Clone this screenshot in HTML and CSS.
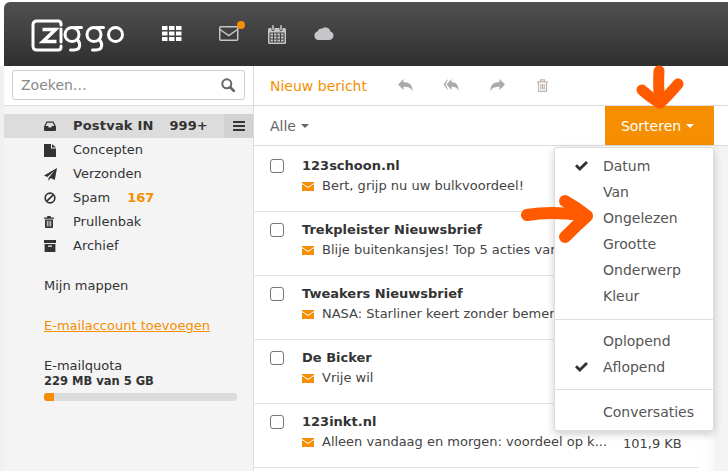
FILE: index.html
```html
<!DOCTYPE html>
<html lang="nl">
<head>
<meta charset="utf-8">
<title>Ziggo Mail</title>
<link rel="stylesheet" href="styles.css">
</head>
<body>
<div class="app">
  <header class="topbar">
    <svg class="logo" width="94" height="34" viewBox="0 0 94 34" fill="none" stroke="#fff" stroke-width="3" stroke-linecap="round">
      <path d="M30 6V5Q30 2 27 2H6Q2 2 2 6V27Q2 31 6 31H27Q30 31 30 28V27"/>
      <path d="M11.500 10.500H24.500L12 22.500H25.500" stroke-width="3.500" stroke-linecap="butt"/>
      <path d="M30 10V23"/>
      <circle cx="41" cy="15.500" r="7"/>
      <path d="M44 8.500H50.500M46 20.500C50 24 50 31 43 31H39.500"/>
      <circle cx="63" cy="15.500" r="7"/>
      <path d="M66 8.500H72.500M68 20.500C72 24 72 31 65 31H61.500"/>
      <circle cx="84.500" cy="15.500" r="7"/>
    </svg>
    <svg class="ico-apps" width="20" height="15" viewBox="0 0 20 15" fill="#fff">
      <rect x="0" y="0" width="5.500" height="4"/><rect x="7" y="0" width="5.500" height="4"/><rect x="14" y="0" width="5.500" height="4"/>
      <rect x="0" y="5.500" width="5.500" height="4"/><rect x="7" y="5.500" width="5.500" height="4"/><rect x="14" y="5.500" width="5.500" height="4"/>
      <rect x="0" y="11" width="5.500" height="4"/><rect x="7" y="11" width="5.500" height="4"/><rect x="14" y="11" width="5.500" height="4"/>
    </svg>
    <span class="mailwrap">
      <svg width="20" height="15" viewBox="0 0 20 15" fill="none" stroke="#c4c6c9" stroke-width="1.500"><rect x=".75" y=".75" width="18" height="13.500" rx="1"/><path d="M1 3.500L9.750 9.500L18.500 3.500"/></svg>
      <span class="dot"></span>
    </span>
    <svg class="ico-cal" width="18" height="19" viewBox="0 0 18 19" fill="#c4c6c9">
      <path d="M1.500 3H3.500V4.500Q3.500 6 5 6T6.500 4.500V3H11.500V4.500Q11.500 6 13 6T14.500 4.500V3H16.500Q18 3 18 4.500V17.500Q18 19 16.500 19H1.500Q0 19 0 17.500V4.500Q0 3 1.500 3ZM1.500 7.500V17.500H16.500V7.500ZM4.200 .8Q4.200 0 5 0T5.800 .8V4.500Q5.800 5.200 5 5.200T4.200 4.500ZM12.200 .8Q12.200 0 13 0T13.800 .8V4.500Q13.800 5.200 13 5.200T12.200 4.500Z"/>
      <path d="M2.500 8.500h2.500v2h-2.500zM6 8.500h2.500v2H6zM9.500 8.500h2.500v2H9.500zM13 8.500h2.500v2H13zM2.500 11.500h2.500v2h-2.500zM6 11.500h2.500v2H6zM9.500 11.500h2.500v2H9.500zM13 11.500h2.500v2H13zM2.500 14.500h2.500v2h-2.500zM6 14.500h2.500v2H6zM9.500 14.500h2.500v2H9.500zM13 14.500h2.500v2H13z"/>
    </svg>
    <svg class="ico-cloud" width="20" height="14" viewBox="0 0 20 14" fill="#c4c6c9"><path d="M4.500 14A4.300 4.300 0 0 1 3.500 5.600A4.700 4.700 0 0 1 8.300 2.400A5 5 0 0 1 16.300 5.400A4.400 4.400 0 0 1 15.500 14Z"/></svg>
  </header>

  <div class="main">
    <aside class="sidebar">
      <div class="searchbar">
        <div class="search">
          <span class="search-text">Zoeken…</span>
          <svg width="14" height="14" viewBox="0 0 14 14" fill="none" stroke="#666" stroke-width="2"><circle cx="5.800" cy="5.800" r="4.500"/><path d="M9 9L13 13" stroke-width="2.500" stroke-linecap="round"/></svg>
        </div>
      </div>
      <nav class="folders">
        <div class="folder active">
          <svg class="ficon" width="12" height="12" viewBox="0 0 12 12" fill="#333"><path d="M2.500 1.500H9.500L12 6.500V10Q12 11 11 11H1Q0 11 0 10V6.500ZM3.200 2.700L1.600 6H4L4.800 7.500H7.200L8 6H10.400L8.800 2.700Z"/></svg>
          <span class="fname">Postvak IN</span><span class="fcount">999+</span>
          <span class="fmenu"><svg width="12" height="10" viewBox="0 0 12 10" fill="#333"><rect width="12" height="2" rx=".5"/><rect y="4" width="12" height="2" rx=".5"/><rect y="8" width="12" height="2" rx=".5"/></svg></span>
        </div>
        <div class="folder">
          <svg class="ficon" width="12" height="13" viewBox="0 0 12 13" fill="#333"><path d="M0 0H7V4.500H12V13H0ZM8 0L12 3.500H8Z"/></svg>
          <span class="fname">Concepten</span>
        </div>
        <div class="folder">
          <svg class="ficon" width="13" height="13" viewBox="0 0 13 13" fill="#333"><path d="M13 0L10.800 12L6.500 10L4.500 13V10L10.500 2.800L3.200 9L0 7.500Z"/></svg>
          <span class="fname">Verzonden</span>
        </div>
        <div class="folder">
          <svg class="ficon" width="12" height="12" viewBox="0 0 12 12" fill="none" stroke="#333" stroke-width="1.700"><circle cx="6" cy="6" r="4.800"/><path d="M2.800 9.200L9.200 2.800"/></svg>
          <span class="fname">Spam</span><span class="fcount spam">167</span>
        </div>
        <div class="folder">
          <svg class="ficon" width="10" height="12" viewBox="0 0 10 12" fill="#333"><path d="M3.500 0H6.500L7.200 1.500H10V2.700H0V1.500H2.800ZM1 3.400H9V11Q9 12 8 12H2Q1 12 1 11ZM2.800 4.800V10.500H3.700V4.800ZM4.600 4.800V10.500H5.400V4.800ZM6.300 4.800V10.500H7.200V4.800Z"/></svg>
          <span class="fname">Prullenbak</span>
        </div>
        <div class="folder">
          <svg class="ficon" width="12" height="12" viewBox="0 0 12 12" fill="#333"><path d="M0 0H12V3H0ZM.6 4H11.400V12H.6ZM4 5.500V6.700H8V5.500Z"/></svg>
          <span class="fname">Archief</span>
        </div>
      </nav>
      <div class="mine">Mijn mappen</div>
      <a class="addacct" href="#">E-mailaccount toevoegen</a>
      <div class="quota">
        <div class="quota-title">E-mailquota</div>
        <div class="quota-value">229 MB van 5 GB</div>
        <div class="quota-bar"><div class="quota-fill" style="width:5.200%"></div></div>
      </div>
    </aside>

    <section class="content">
      <div class="toolbar">
        <span class="newmsg">Nieuw bericht</span>
        <div class="tools">
          <svg width="15" height="13" viewBox="0 0 15 13" fill="#aaa"><path d="M5.500 0V3.200C10 3.200 15 4.500 14.500 12.500C13 8.500 10 7.800 5.500 7.800V11L0 5.500Z"/></svg>
          <svg width="15" height="13" viewBox="0 0 15 13" fill="#aaa"><path d="M3.500 0V1.500L1.500 5.500L3.500 9.500V11L-.5 5.500ZM7.500 0V3.200C11 3.200 15 4.500 14.500 12.500C13.500 8.500 11 7.800 7.500 7.800V11L2.500 5.500Z"/></svg>
          <svg width="15" height="13" viewBox="0 0 15 13" fill="#aaa"><path d="M9.500 0V3.200C5 3.200 0 4.500 .5 12.500C2 8.500 5 7.800 9.500 7.800V11L15 5.500Z"/></svg>
          <svg class="t-trash" width="11" height="13" viewBox="0 0 11 13" fill="none" stroke="#c0b4ac" stroke-width="1.200"><path d="M0 2.800H11M3.500 2.500V.8H7.500V2.500M1.500 3V12.400H9.500V3M3.800 5V10.500M5.500 5V10.500M7.200 5V10.500"/></svg>
        </div>
      </div>
      <div class="filterbar">
        <span class="alle">Alle<span class="caret"></span></span>
        <button class="sort">Sorteren<span class="caret white"></span></button>
      </div>
      <div class="listpane">
        <div class="list">
          <div class="msg">
            <span class="check"></span>
            <div class="msg-body">
              <div class="sender">123schoon.nl</div>
              <div class="subject"><svg class="env" width="12" height="9" viewBox="0 0 12 9"><path fill="#f58e00" d="M0 0H12V9H0Z"/><path d="M0 1.500L6 5.500L12 1.500" fill="none" stroke="#fff" stroke-width="1"/></svg>Bert, grijp nu uw bulkvoordeel!</div>
            </div>
          </div>
          <div class="msg">
            <span class="check"></span>
            <div class="msg-body">
              <div class="sender">Trekpleister Nieuwsbrief</div>
              <div class="subject"><svg class="env" width="12" height="9" viewBox="0 0 12 9"><path fill="#f58e00" d="M0 0H12V9H0Z"/><path d="M0 1.500L6 5.500L12 1.500" fill="none" stroke="#fff" stroke-width="1"/></svg>Blije buitenkansjes! Top 5 acties van deze week</div>
            </div>
          </div>
          <div class="msg">
            <span class="check"></span>
            <div class="msg-body">
              <div class="sender">Tweakers Nieuwsbrief</div>
              <div class="subject"><svg class="env" width="12" height="9" viewBox="0 0 12 9"><path fill="#f58e00" d="M0 0H12V9H0Z"/><path d="M0 1.500L6 5.500L12 1.500" fill="none" stroke="#fff" stroke-width="1"/></svg>NASA: Starliner keert zonder bemensing terug</div>
            </div>
          </div>
          <div class="msg">
            <span class="check"></span>
            <div class="msg-body">
              <div class="sender">De Bicker</div>
              <div class="subject"><svg class="env" width="12" height="9" viewBox="0 0 12 9"><path fill="#f58e00" d="M0 0H12V9H0Z"/><path d="M0 1.500L6 5.500L12 1.500" fill="none" stroke="#fff" stroke-width="1"/></svg>Vrije wil</div>
            </div>
          </div>
          <div class="msg">
            <span class="check"></span>
            <div class="msg-body">
              <div class="sender">123inkt.nl</div>
              <div class="subject"><svg class="env" width="12" height="9" viewBox="0 0 12 9"><path fill="#f58e00" d="M0 0H12V9H0Z"/><path d="M0 1.500L6 5.500L12 1.500" fill="none" stroke="#fff" stroke-width="1"/></svg><span class="subject-text">Alleen vandaag en morgen: voordeel op k...</span><span class="size">101,9 KB</span></div>
            </div>
          </div>
        </div>
      </div>
    </section>
  </div>

  <div class="menu">
    <div class="menu-group">
      <div class="item"><svg class="tick" width="13" height="10" viewBox="0 0 13 10" fill="#333"><path d="M0 5.200L2 3.200L4.800 6L11 0L13 2L4.800 10Z"/></svg>Datum</div>
      <div class="item">Van</div>
      <div class="item">Ongelezen</div>
      <div class="item">Grootte</div>
      <div class="item">Onderwerp</div>
      <div class="item">Kleur</div>
    </div>
    <div class="menu-group">
      <div class="item">Oplopend</div>
      <div class="item"><svg class="tick" width="13" height="10" viewBox="0 0 13 10" fill="#333"><path d="M0 5.200L2 3.200L4.800 6L11 0L13 2L4.800 10Z"/></svg>Aflopend</div>
    </div>
    <div class="menu-group">
      <div class="item">Conversaties</div>
    </div>
  </div>

  <svg class="arrows" width="728" height="471" viewBox="0 0 728 471" fill="none" stroke="#ff5a00" stroke-linecap="round" stroke-linejoin="round">
    <path d="M659 71Q658 88 660 103" stroke-width="11"/>
    <path d="M642 90Q652 99 660 103Q668 96 678 84" stroke-width="11"/>
    <path d="M527 215Q550 211 582 215" stroke-width="12"/>
    <path d="M565 201Q576 207 587 216Q576 226 565 237" stroke-width="12"/>
  </svg>
</div>
</body>
</html>
```
FILE: styles.css
```css
* { box-sizing: border-box; }
html, body { margin: 0; padding: 0; height: 100%; overflow: hidden; background: #fff; }
body { font-family: "DejaVu Sans", Verdana, sans-serif; font-size: 13px; color: #333; }
.app { position: relative; width: 728px; height: 471px; padding: 2px 0 0 4px; overflow: hidden; display: flex; flex-direction: column; }

.topbar { height: 64px; flex: none; background: linear-gradient(#505050, #2f2f2f); border-top-left-radius: 6px; display: flex; align-items: center; }
.logo { margin-left: 27px; margin-top: 3px; }
.ico-apps { margin-left: 37px; margin-top: -1px; }
.mailwrap { position: relative; display: flex; margin-left: 37px; margin-top: -1px; }
.dot { position: absolute; left: 18px; top: -5px; width: 8px; height: 8px; border-radius: 50%; background: #f58e00; }
.ico-cal { margin-left: 29px; margin-top: 1px; }
.ico-cloud { margin-left: 28px; margin-top: -2px; }

.main { flex: 1; display: flex; min-height: 0; margin-left: -4px; border-left: 4px solid #f0f0f0; }
.sidebar { width: 250px; flex: none; border-right: 1px solid #ddd; background: #f4f4f4; }
.searchbar { height: 40px; background: #fff; border-bottom: 1px solid #ddd; padding: 4px 8px 0 8px; }
.search { height: 30px; border: 1px solid #ccc; border-radius: 3px; display: flex; align-items: center; justify-content: space-between; padding: 0 9px 0 8px; background: #fff; }
.search-text { color: #888; font-size: 14px; }
.folders { padding-top: 8px; }
.folder { height: 24px; display: flex; align-items: center; padding: 0 0 2px 40px; position: relative; }
.folder.active { background: #dcdcdc; font-weight: bold; }
.ficon { position: absolute; left: 40px; top: 6px; }
.fname { margin-left: 29px; color: #333; }
.active .fname { letter-spacing: .2px; }
.fcount { margin-left: 16px; }
.fcount.spam { color: #f58e00; font-weight: bold; margin-left: 17px; }
.fmenu { position: absolute; right: 0; top: 0; width: 29px; height: 24px; background: #d2d2d2; display: flex; align-items: center; justify-content: center; }
.mine { margin: 18px 0 0 40px; line-height: 20px; }
.addacct { display: block; margin: 20px 0 0 40px; color: #f58e00; line-height: 20px; }
.quota { margin: 20px 0 0 40px; }
.quota-title { line-height: 19px; }
.quota-value { font-size: 11.500px; font-weight: bold; line-height: 13px; }
.quota-bar { margin-top: 5px; width: 193px; height: 8px; border-radius: 3px; background: #dcdcdc; overflow: hidden; }
.quota-fill { height: 100%; background: #f58e00; }

.content { flex: 1; min-width: 0; display: flex; flex-direction: column; }
.toolbar { height: 40px; flex: none; border-bottom: 1px solid #ddd; display: flex; align-items: center; padding-left: 16px; }
.newmsg { color: #f58e00; font-size: 14px; width: 128px; }
.tools { display: flex; align-items: center; gap: 31px; }
.t-trash { margin-left: 1px; }
.filterbar { height: 40px; flex: none; border-bottom: 1px solid #ddd; display: flex; align-items: stretch; justify-content: space-between; padding: 0 14px 0 16px; }
.alle { font-size: 14px; color: #666; display: flex; align-items: center; }
.caret { display: inline-block; margin-left: 5px; width: 0; height: 0; border-left: 4px solid transparent; border-right: 4px solid transparent; border-top: 4px solid #666; }
.caret.white { border-top-color: #fff; }
.sort { width: 109px; border: 0; padding: 0 4px 0 0; background: #f58e00; color: #fff; font: 14px "DejaVu Sans", Verdana, sans-serif; display: flex; align-items: center; justify-content: center; }
.listpane { flex: 1; min-height: 0; background: linear-gradient(90deg, #fff 445px, #fafafa 460px, #f4f4f4 460px); }
.list { width: 445px; height: 100%; background: #fff; padding-top: 2px; }
.msg { height: 64px; border-bottom: 1px solid #e2e2e2; display: flex; padding: 10px 0 0 16px; }
.check { width: 14px; height: 14px; margin-top: 1px; border: 1.500px solid #777; border-radius: 3px; flex: none; }
.msg-body { margin-left: 18px; flex: 1; min-width: 0; }
.sender { font-weight: bold; line-height: 16px; }
.subject { display: flex; align-items: center; line-height: 20px; height: 22px; white-space: nowrap; overflow: hidden; color: #444; font-size: 13px; margin-top: 1px; }
.env { margin-right: 8px; flex: none; }
.subject-text { width: 301px; }
.size { margin-top: 4px; }

.menu { position: absolute; left: 554px; top: 147px; width: 160px; background: #fff; border: 1px solid #ddd; border-radius: 3px; box-shadow: 0 3px 8px rgba(0,0,0,.2); font-size: 14px; color: #555; }
.menu-group { padding: 8px 0 9px; border-bottom: 1px solid #ddd; }
.menu-group:first-child { padding: 5px 0 10px; }
.menu-group:last-child { padding: 9px 0 5px; border-bottom: 0; }
.item { height: 26px; line-height: 26px; padding-left: 48px; position: relative; }
.tick { position: absolute; left: 20px; top: 8px; }
.arrows { position: absolute; left: 0; top: 0; pointer-events: none; }
```
